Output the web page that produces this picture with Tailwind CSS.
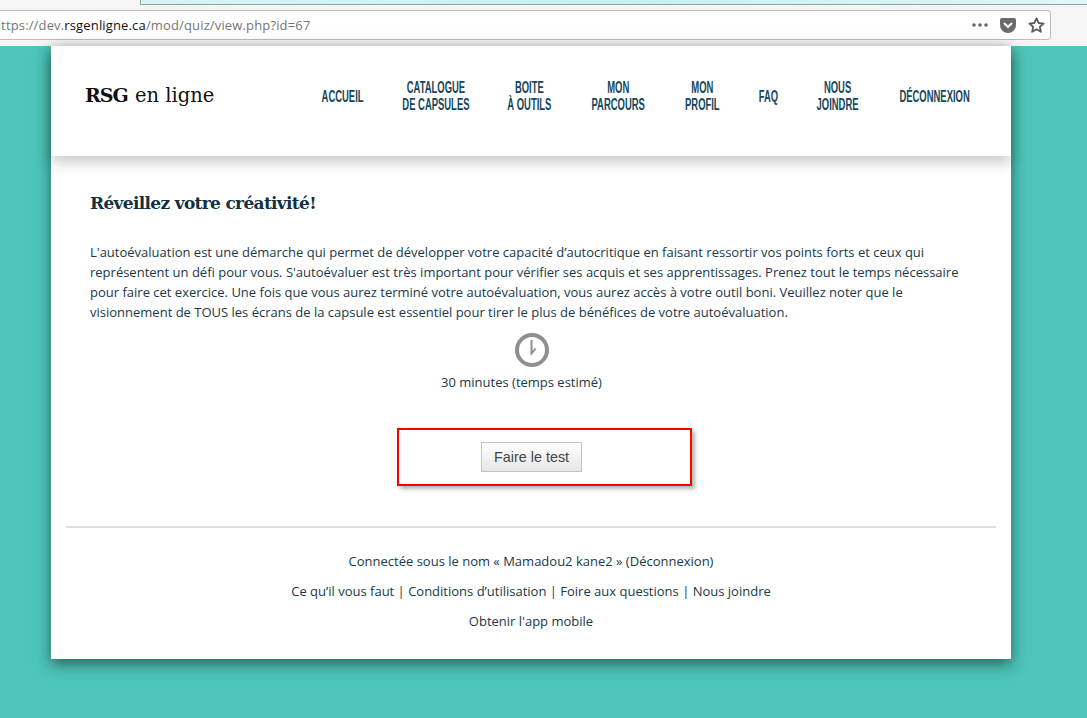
<!DOCTYPE html>
<html lang="fr">
<head>
  <meta charset="UTF-8" />
  <title>RSG en ligne</title>
  <script src="https://cdn.jsdelivr.net/npm/@tailwindcss/browser@4"></script>
</head>
<body class="bg-[#4dc5b9] h-[718px] w-[1087px] overflow-hidden font-['Open_Sans',sans-serif] text-[13px] text-[#1a3848]">

  <!-- browser toolbar -->
  <div class="h-[46px] bg-[#f5f5f5] relative">
    <div class="h-[5px] ml-[140px] bg-gradient-to-r from-[#d8f5f5] via-[#c4f0f0] to-[#e0f7f5] border-l border-b border-[#8fa5a8]"></div>
    <div class="mt-[5px] h-[30px] w-[1051px] bg-white border border-l-0 border-[#bdbdbd] rounded-r-sm flex items-center overflow-hidden">
      <div class="ml-[-7px] mt-[1px] text-[13px] tracking-[0.15px] text-[#757575] whitespace-nowrap">https://dev.<span class="text-[#111]">rsgenligne.ca</span>/mod/quiz/view.php?id=67</div>
      <div class="ml-auto flex items-center">
        <svg width="16" height="4" viewBox="0 0 16 4" class="mr-[12px]"><circle cx="2" cy="2" r="1.8" fill="#666"/><circle cx="8" cy="2" r="1.8" fill="#666"/><circle cx="14" cy="2" r="1.8" fill="#666"/></svg>
        <svg width="16" height="15" viewBox="0 0 16 15" class="mr-[12px]"><path d="M2 0h12a2 2 0 0 1 2 2v5a8 8 0 0 1-16 0V2a2 2 0 0 1 2-2z" fill="#6b6b6b"/><path d="M4.5 5.5 8 9l3.5-3.5" fill="none" stroke="#fff" stroke-width="2" stroke-linecap="round"/></svg>
        <svg width="17" height="16" viewBox="0 0 24 23" class="mr-[5px]"><path d="M12 2l3 6.6 7.2.8-5.4 4.8 1.5 7.1L12 17.7l-6.3 3.6 1.5-7.1L1.8 9.4 9 8.6z" fill="none" stroke="#5a5a5a" stroke-width="2.6" stroke-linejoin="round"/></svg>
      </div>
    </div>
  </div>

  <div class="ml-[51px] w-[960px] h-[613px] bg-white shadow-[0_5px_14px_rgba(0,0,0,0.5)] relative">
    <!-- header -->
    <header class="h-[110px] bg-white relative z-10 shadow-[0_6px_14px_rgba(0,0,0,0.22)] flex items-center pl-[34px] pr-[40px] pb-[10px]">
      <div class="font-['DejaVu_Serif',serif] text-[19.5px] text-[#111] whitespace-nowrap"><span class="font-bold text-[19px] tracking-[-1px] mr-[1px]">RSG</span> en ligne</div>
      <nav class="ml-auto flex items-center gap-[38px] font-['Liberation_Sans',sans-serif] font-bold text-[16px] leading-[17px] text-center text-[#16465c] uppercase">
        <a class="w-[42px] flex justify-center"><span class="shrink-0 scale-x-[0.59]">Accueil</span></a>
        <a class="w-[67px] flex justify-center"><span class="shrink-0 scale-x-[0.59] whitespace-nowrap">Catalogue<br />de capsules</span></a>
        <a class="w-[45px] flex justify-center"><span class="shrink-0 scale-x-[0.59] whitespace-nowrap">Boite<br />à outils</span></a>
        <a class="w-[56px] flex justify-center"><span class="shrink-0 scale-x-[0.59]">Mon<br />parcours</span></a>
        <a class="w-[36px] flex justify-center"><span class="shrink-0 scale-x-[0.59]">Mon<br />profil</span></a>
        <a class="w-[20px] flex justify-center"><span class="shrink-0 scale-x-[0.59]">FAQ</span></a>
        <a class="w-[44px] flex justify-center"><span class="shrink-0 scale-x-[0.59]">Nous<br />joindre</span></a>
        <a class="w-[73px] flex justify-center"><span class="shrink-0 scale-x-[0.59]">Déconnexion</span></a>
      </nav>
    </header>

    <main class="pl-[39px] pr-[40px]">
      <h2 class="pt-[36px] font-['DejaVu_Serif',serif] font-bold text-[17px] leading-[22px] tracking-[-0.67px] text-[#12303f]">Réveillez votre créativité!</h2>
      <p class="mt-[28px] leading-[20px]">L'autoévaluation est une démarche qui permet de développer votre capacité d’autocritique en faisant ressortir vos points forts et ceux qui représentent un défi pour vous. S'autoévaluer est très important pour vérifier ses acquis et ses apprentissages. Prenez tout le temps nécessaire pour faire cet exercice. Une fois que vous aurez terminé votre autoévaluation, vous aurez accès à votre outil boni. Veuillez noter que le visionnement de TOUS les écrans de la capsule est essentiel pour tirer le plus de bénéfices de votre autoévaluation.</p>
      <div class="mt-[10px] flex flex-col items-center">
        <svg width="36" height="36" viewBox="0 0 36 36" class="ml-[3px]"><circle cx="18" cy="18" r="15" fill="none" stroke="#8f8f8f" stroke-width="4"/><path d="M17.5 8v13.5l4-5" fill="none" stroke="#8f8f8f" stroke-width="2"/></svg>
        <div class="mt-[4px] leading-[20px] mr-[18px]">30 minutes (temps estimé)</div>
      </div>
    </main>

    <!-- highlighted button -->
    <div class="ml-[346px] mt-[36px] w-[295px] h-[58px] border-2 border-[#f00] shadow-[3px_3px_4px_rgba(0,0,0,0.3)] flex items-center pl-[82px]">
      <button class="w-[101px] h-[30px] pt-[1px] border border-[#c4c4c4] bg-gradient-to-b from-white to-[#e6e6e6] font-['Liberation_Sans',sans-serif] text-[14.4px] text-[#444]">Faire le test</button>
    </div>

    <footer class="mx-[15px] mt-[40px] border-t-2 border-[#dedede] pt-[23px] text-center leading-[20px]">
      <div>Connectée sous le nom « Mamadou2 kane2 » (Déconnexion)</div>
      <div class="mt-[10px]">Ce qu’il vous faut | Conditions d’utilisation | Foire aux questions | Nous joindre</div>
      <div class="mt-[10px]">Obtenir l'app mobile</div>
    </footer>
  </div>
</body>
</html>
